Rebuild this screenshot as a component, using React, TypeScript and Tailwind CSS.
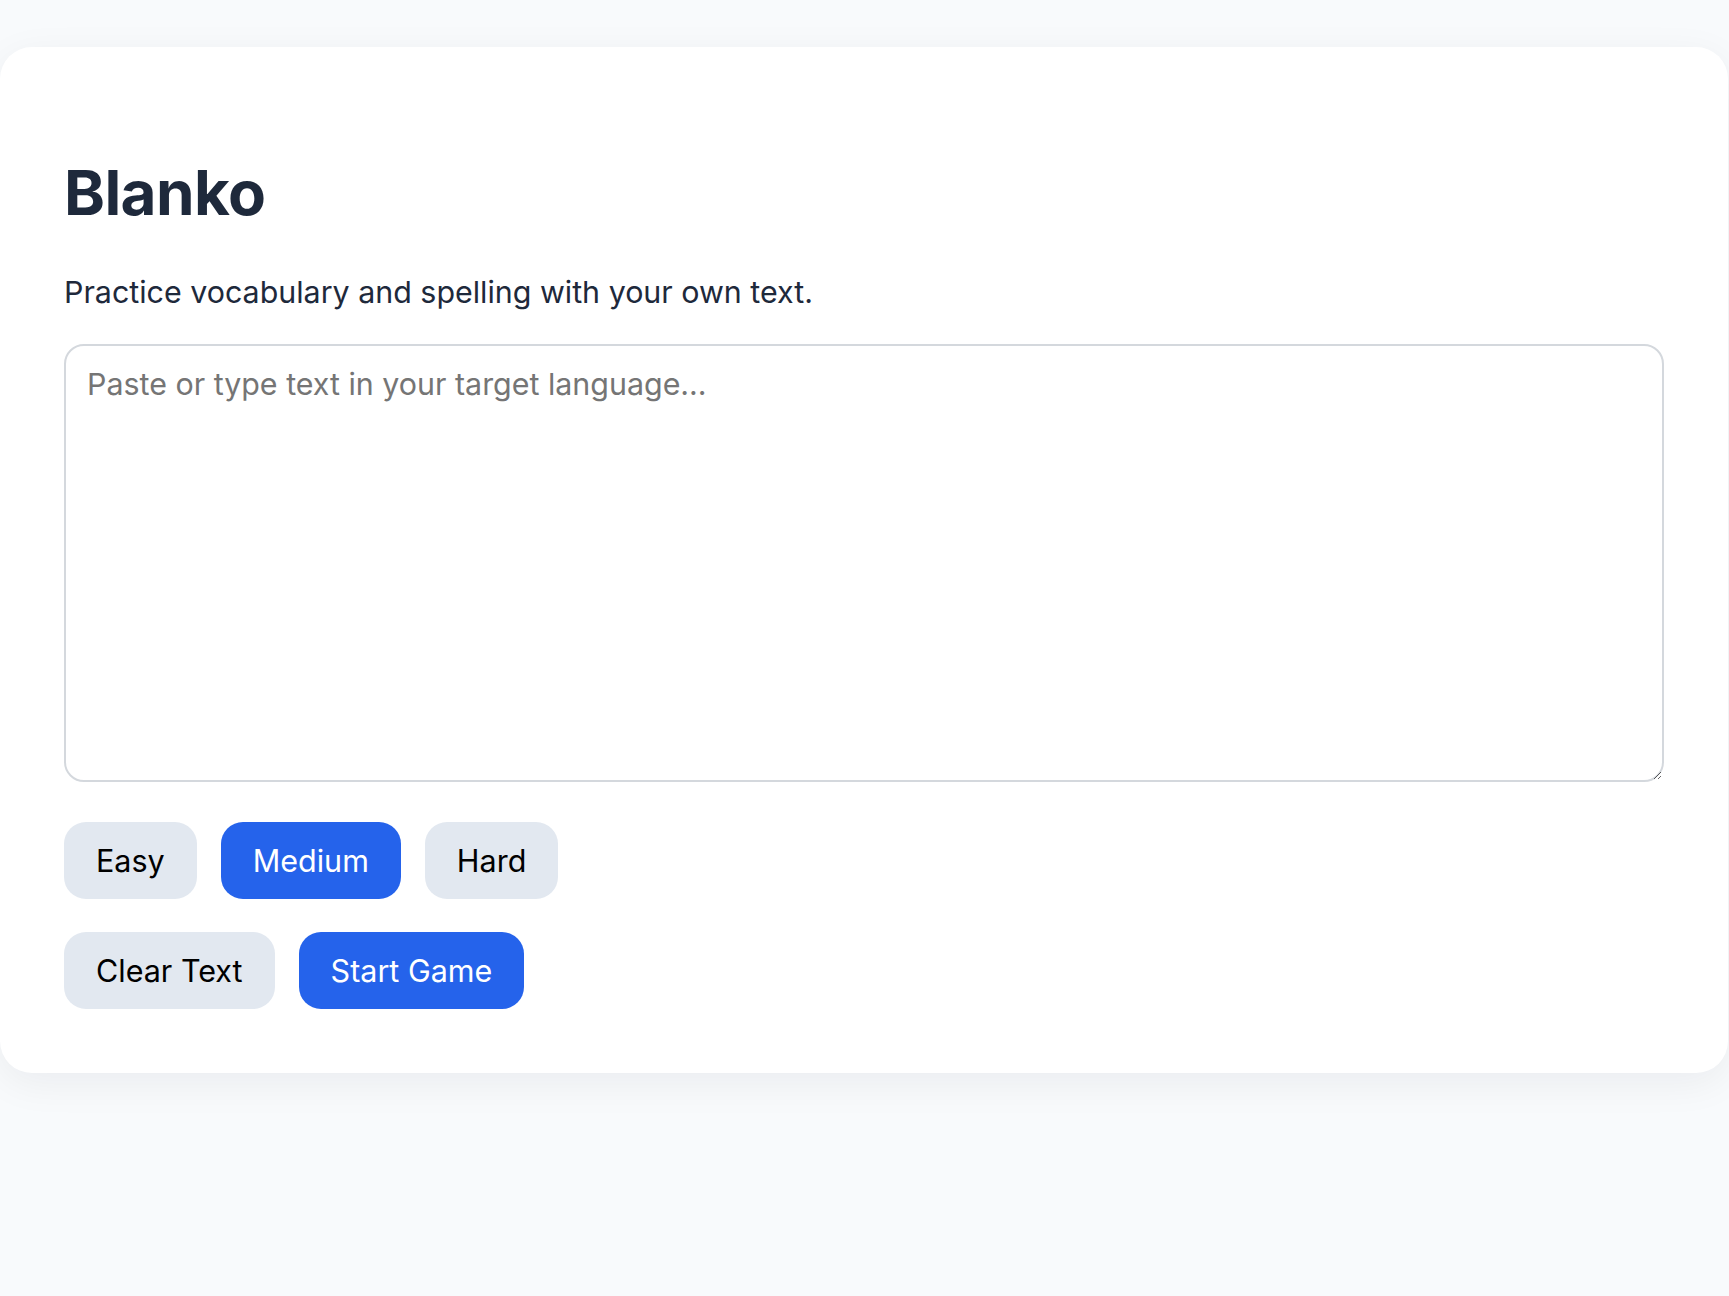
import React from "react";

export default function App() {
  const font = { fontFamily: "Inter, 'Noto Sans', sans-serif" };
  const btn = "rounded-[22px] px-8 py-[15px] text-[30.5px] leading-[47px]";
  return (
    <div className="min-h-[1296px] w-full bg-[#f8fafc] pt-[47px] pr-[1px]" style={font}>
      <div className="w-full rounded-[32px] bg-white px-16 pt-[115px] pb-[64px] shadow-[0_10px_40px_rgba(15,23,42,0.06)]">
        <h1 className="text-[62px] font-bold leading-none tracking-[-0.01em] text-[#1e293b]">Blanko</h1>
        <p className="mt-[46px] text-[30.4px] leading-[45px] text-[#1e293b]">
          Practice vocabulary and spelling with your own text.
        </p>
        <textarea
          className="mt-[29px] block h-[438px] w-full rounded-[20px] border-2 border-[#d4d8dd] bg-white px-[21px] py-[15px] text-[30.4px] leading-[46px] text-[#1e293b] outline-none placeholder:text-[#757575]"
          placeholder="Paste or type text in your target language..."
        />
        <div className="mt-[40px] flex gap-6">
          <button className={`${btn} bg-[#e2e8f0] text-black`}>Easy</button>
          <button className={`${btn} bg-[#2563eb] text-white`}>Medium</button>
          <button className={`${btn} bg-[#e2e8f0] text-black`}>Hard</button>
        </div>
        <div className="mt-[33px] flex gap-6">
          <button className={`${btn} bg-[#e2e8f0] text-black`}>Clear Text</button>
          <button className={`${btn} bg-[#2563eb] text-white`}>Start Game</button>
        </div>
      </div>
    </div>
  );
}
